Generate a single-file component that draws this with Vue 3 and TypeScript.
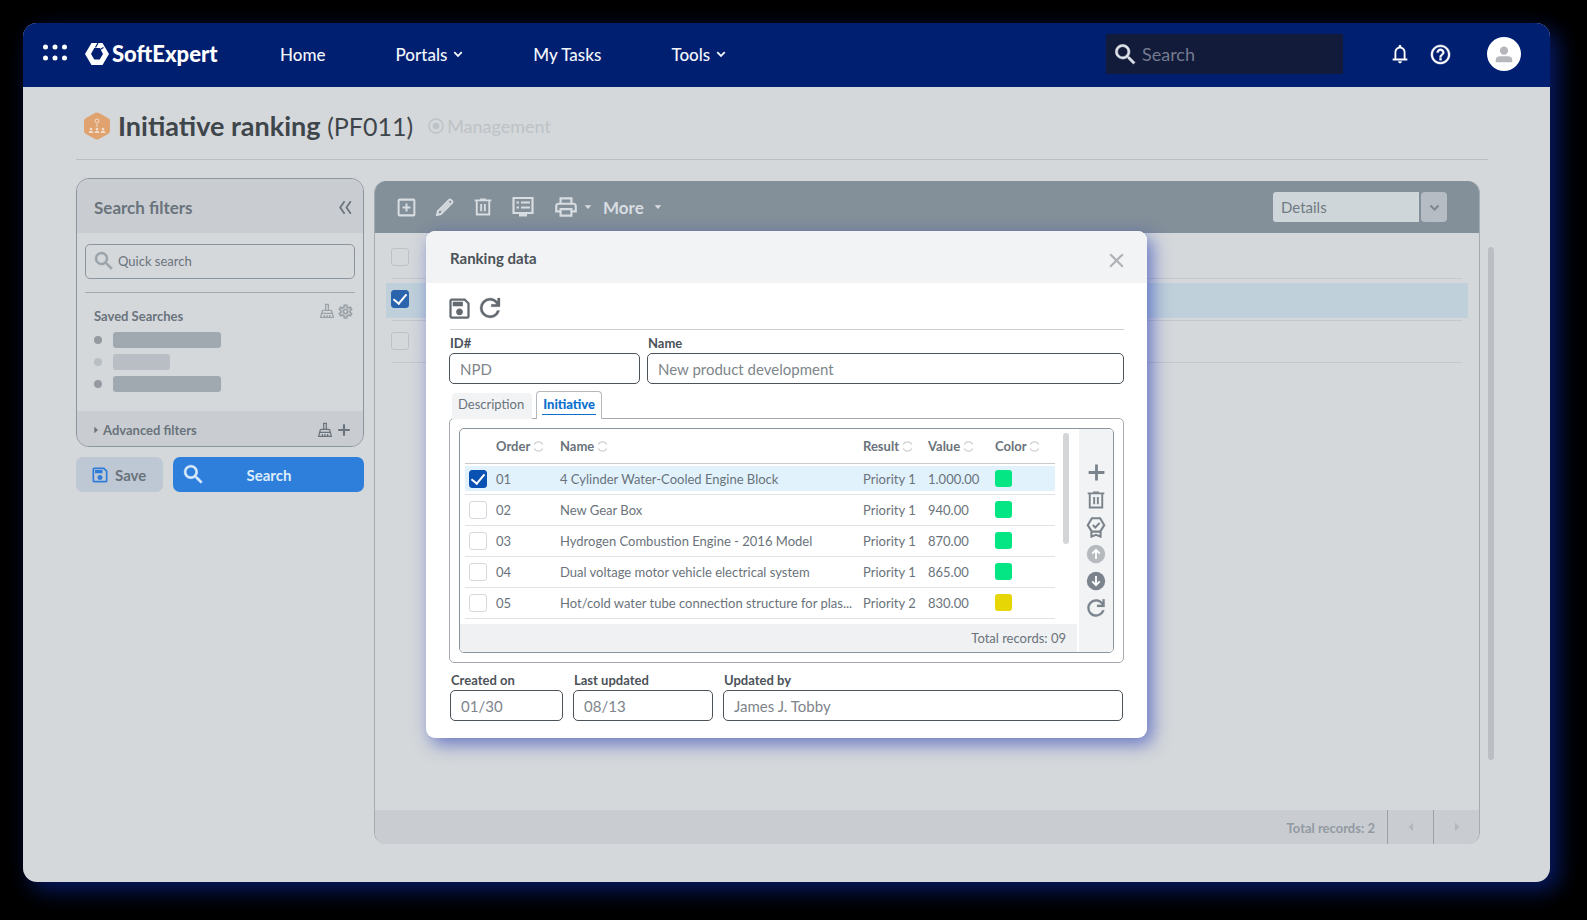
<script setup lang="ts">
import { h, ref } from 'vue'

interface Part {
  d: string
  w?: number
  c?: string
}

const icons: Record<string, Part[]> = {
  search: [{ d: 'M15.5 14h-.79l-.28-.27A6.471 6.471 0 0 0 16 9.5 6.5 6.5 0 1 0 9.5 16c1.61 0 3.09-.59 4.23-1.57l.27.28v.79l5 4.99L20.49 19l-4.99-5zm-6 0C7.01 14 5 11.99 5 9.5S7.01 5 9.5 5 14 7.01 14 9.5 11.99 14 9.5 14z', w: 0.5, c: 'both' }],
  bell: [{ d: 'M4 19v-2h2v-7q0-2.075 1.25-3.687T10.5 4.2v-.7q0-.625.438-1.062T12 2t1.063.438T13.5 3.5v.7q2 .5 3.25 2.113T18 10v7h2v2zm8 3q-.825 0-1.412-.587T10 20h4q0 .825-.587 1.413T12 22m-4-5h8v-7q0-1.65-1.175-2.825T12 6T9.175 7.175T8 10z' }],
  help: [{ d: 'M11 18h2v-2h-2v2zm1-16C6.48 2 2 6.48 2 12s4.48 10 10 10 10-4.48 10-10S17.52 2 12 2zm0 18c-4.41 0-8-3.59-8-8s3.59-8 8-8 8 3.59 8 8-3.59 8-8 8zm0-14c-2.21 0-4 1.79-4 4h2c0-1.1.9-2 2-2s2 .9 2 2c0 2-3 1.75-3 5h2c0-2.25 3-2.5 3-5 0-2.21-1.79-4-4-4z', w: 0.4, c: 'both' }],
  save: [{ d: 'M17 3H5c-1.11 0-2 .9-2 2v14c0 1.1.89 2 2 2h14c1.1 0 2-.9 2-2V7l-4-4zm2 16H5V5h11.17L19 7.83V19zm-7-7c-1.66 0-3 1.34-3 3s1.34 3 3 3 3-1.34 3-3-1.34-3-3-3zM6 6h9v4H6z' }],
  refresh: [{ d: 'M12 20q-3.35 0-5.675-2.325T4 12t2.325-5.675T12 4q1.725 0 3.3.712T18 6.75V4h2v7h-7V9h4.2q-.8-1.4-2.187-2.2T12 6Q9.5 6 7.75 7.75T6 12t1.75 4.25T12 18q1.925 0 3.475-1.1T17.65 14h2.1q-.7 2.65-2.85 4.325T12 20', w: 0.2, c: 'both' }],
  print: [{ d: 'M19 8h-1V3H6v5H5c-1.66 0-3 1.34-3 3v6h4v4h12v-4h4v-6c0-1.66-1.34-3-3-3zM8 5h8v3H8V5zm8 12v2H8v-4h8v2zm2-2v-2H6v2H4v-4c0-.55.45-1 1-1h14c.55 0 1 .45 1 1v4h-2z' }],
  trash: [{ d: 'M2 4h20M8.5 3h7M4.5 4.500v16.500h15V4.500M9.800 8.500v8.500M14.200 8.500v8.500', w: 2.3 }],
  addBox: [{ d: 'M4 3h16a1 1 0 0 1 1 1v16a1 1 0 0 1-1 1H4a1 1 0 0 1-1-1V4a1 1 0 0 1 1-1zM12 7.500v9M7.500 12h9', w: 2.3 }],
  pencil: [{ d: 'M2.500 21.500l1-4.500L17 3.500q1-1 2 0l1.500 1.500q1 1 0 2L7 20.500zM7 17L17.500 6.500', w: 2.4 }],
  monitor: [{ d: 'M2.500 3h19v15h-19zM10 7.500h9M10 12.500h9', w: 2.2 }, { d: 'M5.500 6.400h2.500v2.200H5.500zM5.500 11.400h2.500v2.200H5.500zM8 18h8v3.500H8z' }],
  plus: [{ d: 'M12 2v20M2 12h20', w: 3.6 }],
  close: [{ d: 'M4 4l16 16M20 4L4 20', w: 2.8 }],
  medal: [{ d: 'M7.500 2.500h9L21 10l-4.500 7h-9L3 10zM8.500 9.800l2.700 2.700 4.800-5M7 17v5.500l5-2 5 2V17', w: 2.3 }],
  up: [{ d: 'M12 1a11 11 0 1 0 0 22a11 11 0 1 0 0-22z' }, { d: 'M12 18V7M7.500 11.500L12 7l4.500 4.500', w: 2.2, c: '#fff' }],
  down: [{ d: 'M12 1a11 11 0 1 0 0 22a11 11 0 1 0 0-22z' }, { d: 'M12 6v11M7.500 12.500L12 17l4.500-4.500', w: 2.2, c: '#fff' }],
  broom: [{ d: 'M10 2h4v9h-4zM4.500 15.500v-2.500q0-2 2-2h11q2 0 2 2v2.500M2.500 21.500l1.500-6h16l1.500 6zM8 21v-3M12 21v-3M16 21v-3', w: 1.9 }],
  gear: [{ d: 'M19.43 12.98c.04-.32.07-.64.07-.98 0-.34-.03-.66-.07-.98l2.11-1.65c.19-.15.24-.42.12-.64l-2-3.460c-.09-.16-.26-.25-.44-.25-.06 0-.12.01-.17.03l-2.490 1c-.52-.4-1.080-.73-1.690-.98l-.38-2.650C14.460 2.180 14.250 2 14 2h-4c-.25 0-.46.18-.49.42l-.38 2.650c-.61.25-1.170.59-1.690.98l-2.490-1c-.06-.02-.12-.03-.18-.03-.17 0-.34.09-.43.25l-2 3.460c-.13.22-.07.49.12.64l2.110 1.650c-.04.32-.07.65-.07.98 0 .33.03.66.07.98l-2.110 1.650c-.19.15-.24.42-.12.64l2 3.460c.09.16.26.25.44.25.06 0 .12-.01.17-.03l2.490-1c.52.4 1.080.73 1.690.98l.38 2.650c.03.24.24.42.49.42h4c.25 0 .46-.18.49-.42l.38-2.650c.61-.25 1.170-.59 1.690-.98l2.490 1c.06.02.12.03.18.03.17 0 .34-.09.43-.25l2-3.460c.12-.22.07-.49-.12-.64l-2.110-1.650zm-1.980-1.710c.04.31.05.52.05.73 0 .21-.02.43-.05.73l-.14 1.130.89.7 1.080.84-.7 1.210-1.270-.51-1.040-.42-.9.68c-.43.32-.84.56-1.250.73l-1.060.43-.16 1.130-.2 1.350h-1.400l-.19-1.350-.16-1.130-1.060-.43c-.43-.18-.83-.41-1.230-.71l-.91-.7-1.060.43-1.270.51-.7-1.210 1.080-.84.89-.7-.14-1.130c-.03-.31-.05-.54-.05-.74s.02-.43.05-.73l.14-1.130-.89-.7-1.080-.84.7-1.210 1.270.51 1.040.42.9-.68c.43-.32.84-.56 1.250-.73l1.060-.43.16-1.130.2-1.350h1.390l.19 1.350.16 1.130 1.060.43c.43.18.83.41 1.230.71l.91.7 1.060-.43 1.270-.51.7 1.210-1.070.85-.89.7.14 1.130zM12 8c-2.210 0-4 1.790-4 4s1.790 4 4 4 4-1.790 4-4-1.790-4-4-4zm0 6c-1.100 0-2-.9-2-2s.9-2 2-2 2 .9 2 2-.9 2-2 2z', w: 0.5, c: 'both' }],
  chevron: [{ d: 'M3 7.500l9 9 9-9', w: 4.4 }],
  collapse: [{ d: 'M10.500 2L3.500 12l7 10M20.500 2l-7 10 7 10', w: 2.8 }],
  caretDown: [{ d: 'M2 7h20L12 18z' }],
  caretRight: [{ d: 'M7 2v20l11-10z' }],
  caretLeft: [{ d: 'M17 2v20L6 12z' }],
  sort: [{ d: 'M3 8q2-6 9-6t9 6M3 16q2 6 9 6t9-6', w: 2.6 }],
  target: [{ d: 'M12 1.500a10.500 10.500 0 1 0 0 21a10.500 10.500 0 1 0 0-21z', w: 2.200 }, { d: 'M12 7a5 5 0 1 0 0 10a5 5 0 1 0 0-10z' }],
  dots: [{ d: 'M0 5a2.500 2.500 0 1 0 5 0a2.500 2.500 0 1 0-5 0M9.500 5a2.500 2.500 0 1 0 5 0a2.500 2.500 0 1 0-5 0M19 5a2.500 2.500 0 1 0 5 0a2.500 2.500 0 1 0-5 0M0 16a2.500 2.500 0 1 0 5 0a2.500 2.500 0 1 0-5 0M9.500 16a2.500 2.500 0 1 0 5 0a2.500 2.500 0 1 0-5 0M19 16a2.500 2.500 0 1 0 5 0a2.500 2.500 0 1 0-5 0' }],
  person: [{ d: 'M12 2a5.500 5.500 0 1 0 0 11a5.500 5.500 0 1 0 0-11zM1 23v-3q0-5 6-5h10q6 0 6 5v3z' }],
}

const Icon = (props: { name: string; size: number }) =>
  h(
    'svg',
    { viewBox: '0 0 24 24', width: props.size, height: props.size, 'aria-hidden': 'true' },
    icons[props.name].map((p) =>
      h('path', {
        d: p.d,
        fill: !p.w || p.c === 'both' ? 'currentColor' : 'none',
        stroke: p.w ? (p.c && p.c !== 'both' ? p.c : 'currentColor') : 'none',
        'stroke-width': p.w,
      }),
    ),
  )
Icon.props = ['name', 'size']

const nav = [
  { label: 'Home', menu: false },
  { label: 'Portals', menu: true },
  { label: 'My Tasks', menu: false },
  { label: 'Tools', menu: true },
]

const mainTools = [
  { name: 'addBox', label: 'Add', size: 21 },
  { name: 'pencil', label: 'Edit', size: 20 },
  { name: 'trash', label: 'Delete', size: 20 },
  { name: 'monitor', label: 'View', size: 24 },
]

const sideTools = [
  { name: 'plus', label: 'Add', size: 19 },
  { name: 'trash', label: 'Delete', size: 20 },
  { name: 'medal', label: 'Evaluate', size: 22 },
  { name: 'up', label: 'Move up', size: 20, muted: true },
  { name: 'down', label: 'Move down', size: 20 },
  { name: 'refresh', label: 'Refresh', size: 26 },
]

const columns = ['Order', 'Name', 'Result', 'Value', 'Color']

const rows = ref([
  { on: true, order: '01', name: '4 Cylinder Water-Cooled Engine Block', result: 'Priority 1', value: '1.000.00', color: 'green' },
  { on: false, order: '02', name: 'New Gear Box', result: 'Priority 1', value: '940.00', color: 'green' },
  { on: false, order: '03', name: 'Hydrogen Combustion Engine - 2016 Model', result: 'Priority 1', value: '870.00', color: 'green' },
  { on: false, order: '04', name: 'Dual voltage motor vehicle electrical system', result: 'Priority 1', value: '865.00', color: 'green' },
  { on: false, order: '05', name: 'Hot/cold water tube connection structure for plas...', result: 'Priority 2', value: '830.00', color: 'yellow' },
])

const records = ref([false, true, false])
const id = ref('NPD')
const name = ref('New product development')
const created = ref('01/30')
const updated = ref('08/13')
const author = ref('James J. Tobby')
</script>

<template>
  <div class="page">
    <div class="window">
      <header class="topbar">
        <button class="plain" aria-label="Applications"><Icon name="dots" :size="24" /></button>
        <a href="#" class="brand">
          <svg viewBox="0 0 24 22" width="24" height="22" aria-hidden="true">
            <path fill="#fff" fill-rule="evenodd" d="M6.500 0h11L24 11l-6.500 11h-11L0 11zM9.300 5L6 11l3.300 5.500h5.400L18 11l-3.300-6z" />
            <path fill="none" stroke="#011f71" stroke-width="1.200" d="M13 0l-2.500 4.500M13.500 7.500l5-3" />
          </svg>
          <span>SoftExpert</span>
        </a>
        <nav class="nav">
          <a v-for="item in nav" :key="item.label" href="#">
            {{ item.label }}<Icon v-if="item.menu" name="chevron" :size="10" />
          </a>
        </nav>
        <label class="topsearch">
          <Icon name="search" :size="27" />
          <input type="search" placeholder="Search" aria-label="Search" />
        </label>
        <div class="actions">
          <button class="plain" aria-label="Notifications"><Icon name="bell" :size="22" /></button>
          <button class="plain" aria-label="Help"><Icon name="help" :size="23" /></button>
        </div>
        <button class="avatar" aria-label="Profile"><Icon name="person" :size="18" /></button>
      </header>

      <main class="content">
        <div class="titlebar">
          <svg class="badge" viewBox="0 0 26 28" width="26" height="28" aria-hidden="true">
            <path fill="#e0a36f" d="M11 1q2-1 4 0l9 5q2 1 2 3v10q0 2-2 3l-9 5q-2 1-4 0l-9-5q-2-1-2-3V9q0-2 2-3z" />
            <g fill="none" stroke="#f0dccb" stroke-width="1">
              <circle cx="13" cy="9" r="2" />
              <path d="M13 12v3" />
            </g>
            <g fill="#f0dccb">
              <circle cx="7" cy="17" r="1.300" /><circle cx="13" cy="17" r="1.300" /><circle cx="19" cy="17" r="1.300" />
              <path d="M4.500 21q.5-2.500 2.500-2.500t2.500 2.500zM10.500 21q.5-2.500 2.500-2.500t2.500 2.500zM16.500 21q.5-2.500 2.500-2.500t2.500 2.500z" />
            </g>
          </svg>
          <h1>Initiative ranking <span>(PF011)</span></h1>
          <span class="crumb"><Icon name="target" :size="16" />Management</span>
        </div>

        <div class="columns">
          <aside class="side">
            <section class="filters">
              <header>
                <h2>Search filters</h2>
                <button class="plain" aria-label="Collapse"><Icon name="collapse" :size="15" /></button>
              </header>
              <div class="filterbody">
                <label class="quick">
                  <Icon name="search" :size="24" />
                  <input type="search" placeholder="Quick search" aria-label="Quick search" />
                </label>
                <div class="saved">
                  <div class="savedhead">
                    <h3>Saved Searches</h3>
                    <span class="pair faint">
                      <button class="plain" aria-label="Clear saved search"><Icon name="broom" :size="16" /></button>
                      <button class="plain" aria-label="Settings"><Icon name="gear" :size="17" /></button>
                    </span>
                  </div>
                  <ul>
                    <li><i></i></li>
                    <li class="short"><i></i></li>
                    <li><i></i></li>
                  </ul>
                </div>
              </div>
              <footer>
                <button class="plain advanced"><Icon name="caretRight" :size="8" />Advanced filters</button>
                <span class="pair">
                  <button class="plain" aria-label="Clear filters"><Icon name="broom" :size="16" /></button>
                  <button class="plain" aria-label="Add filter"><Icon name="plus" :size="14" /></button>
                </span>
              </footer>
            </section>
            <div class="buttons">
              <button class="btn save"><Icon name="save" :size="20" />Save</button>
              <button class="btn go"><Icon name="search" :size="25" /><span>Search</span></button>
            </div>
          </aside>

          <section class="board">
            <div class="toolbar">
              <button v-for="t in mainTools" :key="t.name" class="plain tool" :aria-label="t.label">
                <Icon :name="t.name" :size="t.size" />
              </button>
              <button class="plain tool print" aria-label="Print">
                <Icon name="print" :size="26" /><Icon name="caretDown" :size="8" />
              </button>
              <button class="plain more">More<Icon name="caretDown" :size="8" /></button>
              <div class="picker">
                <select aria-label="View mode"><option>Details</option></select>
                <span><Icon name="chevron" :size="11" /></span>
              </div>
            </div>
            <ul class="records">
              <li v-for="(r, i) in records" :key="i" :class="{ selected: r }">
                <input v-model="records[i]" type="checkbox" :aria-label="'Select record ' + i" />
              </li>
            </ul>
            <footer class="pager">
              <span>Total records: 2</span>
              <button class="plain" aria-label="Previous page"><Icon name="caretLeft" :size="10" /></button>
              <button class="plain" aria-label="Next page"><Icon name="caretRight" :size="10" /></button>
            </footer>
          </section>
          <div class="scroll"></div>
        </div>
      </main>

      <div class="overlay">
        <section class="modal" role="dialog" aria-label="Ranking data">
          <header>
            <h2>Ranking data</h2>
            <button class="plain" aria-label="Close"><Icon name="close" :size="19" /></button>
          </header>
          <div class="modalbody">
            <div class="modaltools">
              <button class="plain" aria-label="Save record"><Icon name="save" :size="27" /></button>
              <button class="plain" aria-label="Reload"><Icon name="refresh" :size="30" /></button>
            </div>
            <div class="fields top">
              <label class="field"><span>ID#</span><input v-model="id" type="text" /></label>
              <label class="field"><span>Name</span><input v-model="name" type="text" /></label>
            </div>
            <div class="tabs" role="tablist">
              <button class="tab" role="tab">Description</button>
              <button class="tab active" role="tab" aria-selected="true"><span>Initiative</span></button>
            </div>
            <div class="panel">
              <div class="grid">
                <div class="gridmain">
                  <div class="gridview">
                    <table>
                      <thead>
                        <tr>
                          <th class="pick"></th>
                          <th v-for="c in columns" :key="c" :class="c.toLowerCase()">
                            {{ c }} <Icon name="sort" :size="11" />
                          </th>
                        </tr>
                      </thead>
                      <tbody>
                        <tr v-for="row in rows" :key="row.order" :class="{ selected: row.on }">
                          <td><input v-model="row.on" type="checkbox" :aria-label="'Select ' + row.order" /></td>
                          <td>{{ row.order }}</td>
                          <td>{{ row.name }}</td>
                          <td>{{ row.result }}</td>
                          <td>{{ row.value }}</td>
                          <td><i class="swatch" :class="row.color"></i></td>
                        </tr>
                      </tbody>
                    </table>
                    <div class="thumb"></div>
                  </div>
                  <footer>Total records: 09</footer>
                </div>
                <div class="gridtools">
                  <button v-for="t in sideTools" :key="t.name" class="plain" :class="{ muted: t.muted }" :aria-label="t.label">
                    <Icon :name="t.name" :size="t.size" />
                  </button>
                </div>
              </div>
            </div>
            <div class="fields bottom">
              <label class="field"><span>Created on</span><input v-model="created" type="text" /></label>
              <label class="field"><span>Last updated</span><input v-model="updated" type="text" /></label>
              <label class="field"><span>Updated by</span><input v-model="author" type="text" /></label>
            </div>
          </div>
        </section>
      </div>
    </div>
  </div>
</template>

<style>
body {
  margin: 0;
  background: #000;
}
</style>

<style scoped>
.page,
.page * {
  box-sizing: border-box;
}
.page {
  display: flex;
  min-height: 100vh;
  padding: 23px 37px 38px 23px;
  background: #000;
  font-family: Lato, "Liberation Sans", sans-serif;
  font-size: 13px;
  color: #6a737b;
}
.page h1,
.page h2,
.page h3,
.page ul {
  margin: 0;
  padding: 0;
  list-style: none;
}
.page svg {
  flex: none;
  display: block;
}
.page input,
.page button,
.page select {
  font-family: inherit;
}
.plain {
  display: flex;
  align-items: center;
  justify-content: center;
  padding: 0;
  border: 0;
  background: none;
  color: inherit;
}
.window {
  position: relative;
  display: flex;
  flex-direction: column;
  flex: 1;
  min-width: 0;
  border-radius: 14px;
  background: #d4d8db;
  box-shadow: 8px 8px 22px #071a66;
}
.topbar {
  display: flex;
  align-items: center;
  height: 64px;
  padding: 0 29px 2px 20px;
  border-radius: 14px 14px 0 0;
  background: #011f71;
  color: #fff;
}
.brand {
  display: flex;
  align-items: center;
  gap: 3px;
  width: 194px;
  margin-left: 18px;
  margin-right: 1px;
  color: #fff;
  font-size: 22px;
  font-weight: 900;
  line-height: 22px;
  text-decoration: none;
}
.nav {
  display: flex;
  gap: 70px;
  flex: 1;
}
.nav a {
  display: flex;
  align-items: center;
  gap: 6px;
  color: #f2f6fc;
  font-size: 17px;
  font-weight: 500;
  text-decoration: none;
}
.topsearch {
  display: flex;
  align-items: center;
  gap: 3px;
  width: 237px;
  height: 40px;
  padding: 0 6px;
  background: #121b39;
  color: #dfe3ea;
}
.topsearch input,
.quick input {
  flex: 1;
  min-width: 0;
  padding: 0;
  border: 0;
  outline: 0;
  background: none;
  color: inherit;
}
.topsearch input {
  font-size: 18px;
}
.topsearch input::placeholder {
  color: #737a90;
}
.actions {
  display: flex;
  gap: 18px;
  margin: 0 35px 0 46px;
}
.avatar {
  display: flex;
  align-items: center;
  justify-content: center;
  width: 34px;
  height: 34px;
  padding: 0;
  border: 0;
  border-radius: 50%;
  background: #fff;
  color: #b5b7ba;
}
.content {
  display: flex;
  flex-direction: column;
  flex: 1;
  padding: 0 56px 38px 53px;
}
.titlebar {
  display: flex;
  align-items: center;
  height: 73px;
  margin-right: 6px;
  padding: 6px 8px 0;
  border-bottom: 1px solid #b9bec2;
}
.titlebar h1 {
  margin-left: 8px;
  color: #3f464b;
  font-size: 27px;
  font-weight: 700;
  line-height: 32px;
}
.titlebar h1 span {
  font-size: 25px;
  font-weight: 400;
}
.crumb {
  display: flex;
  align-items: center;
  gap: 3px;
  margin-left: 15px;
  color: #bdc2c6;
  font-size: 18px;
}
.columns {
  display: flex;
  flex: 1;
  padding-top: 18px;
}
.side {
  width: 288px;
}
.filters {
  overflow: hidden;
  border: 1px solid #8b959d;
  border-radius: 13px;
}
.filters header {
  display: flex;
  align-items: center;
  justify-content: space-between;
  height: 54px;
  padding: 2px 10px 0 17px;
  background: #c9cdd2;
}
.filters h2 {
  font-size: 17px;
  font-weight: 700;
}
.filterbody {
  padding: 11px 8px 0;
}
.quick {
  display: flex;
  align-items: center;
  gap: 2px;
  height: 35px;
  padding: 0 0 2px 6px;
  border: 1px solid #8b959d;
  border-radius: 5px;
  color: #9aa3a9;
}
.quick input {
  font-size: 13px;
}
.quick input::placeholder {
  color: #6a737b;
}
.saved {
  height: 119px;
  margin-top: 13px;
  padding: 10px 1px 0 9px;
  border-top: 1px solid #a3abb1;
}
.savedhead {
  display: flex;
  justify-content: space-between;
  height: 29px;
}
.savedhead h3 {
  padding-top: 5px;
  font-size: 13px;
  font-weight: 700;
  line-height: 16px;
}
.pair {
  display: flex;
  align-items: center;
  gap: 4px;
}
.faint {
  align-items: flex-start;
  gap: 2px;
  color: #9aa2a8;
}
.saved ul {
  display: flex;
  flex-direction: column;
  gap: 6px;
}
.saved li {
  display: flex;
  align-items: center;
  gap: 11px;
}
.saved li::before {
  content: "";
  width: 8px;
  height: 8px;
  border-radius: 50%;
  background: #949a9f;
}
.saved li i {
  width: 108px;
  height: 16px;
  border-radius: 3px;
  background: #a1a9b0;
}
.saved li.short::before {
  background: #b9bec3;
}
.saved li.short i {
  width: 57px;
  background: #b9bec4;
}
.filters footer {
  display: flex;
  align-items: center;
  justify-content: space-between;
  height: 35px;
  padding: 2px 12px 0 15px;
  background: #c9cdd2;
}
.advanced {
  gap: 3px;
  font-size: 13px;
  font-weight: 700;
}
.buttons {
  display: flex;
  gap: 10px;
  margin-top: 10px;
}
.btn {
  display: flex;
  align-items: center;
  height: 35px;
  border: 0;
  border-radius: 7px;
  font-size: 15px;
  font-weight: 700;
}
.save {
  gap: 5px;
  width: 87px;
  padding: 0 14px;
  background: #bdc8d4;
  color: #6a737b;
}
.save svg {
  color: #2f7cd8;
}
.go {
  flex: 1;
  padding: 0 8px;
  background: #2e7edc;
  color: #dcecfb;
}
.go span {
  flex: 1;
  padding-right: 24px;
  text-align: center;
}
.board {
  display: flex;
  flex-direction: column;
  flex: 1;
  min-width: 0;
  margin: 3px 0 0 10px;
  overflow: hidden;
  border: 1px solid #a4abb1;
  border-bottom: 0;
  border-top: 0;
  border-radius: 12px;
}
.toolbar {
  display: flex;
  align-items: center;
  height: 52px;
  padding: 0 32px 0 21px;
  background: #838f99;
  color: #d8dde1;
}
.tool {
  margin-right: 18px;
}
.tool.print {
  gap: 5px;
  margin-right: 11px;
}
.more {
  gap: 10px;
  font-size: 17px;
  font-weight: 700;
}
.picker {
  display: flex;
  position: relative;
  width: 174px;
  height: 30px;
  margin-left: auto;
}
.picker select {
  width: 100%;
  height: 100%;
  padding: 0 8px;
  border: 0;
  border-right: 28px solid #838f99;
  border-radius: 3px;
  appearance: none;
  background: #ced6da;
  color: #717a82;
  font-size: 15px;
}
.picker span {
  position: absolute;
  right: 0;
  display: flex;
  align-items: center;
  justify-content: center;
  width: 26px;
  height: 30px;
  border-radius: 4px;
  background: #b5bcc3;
  color: #7f8890;
  pointer-events: none;
}
.records {
  display: flex;
  flex-direction: column;
  flex: 1;
}
.page .records {
  padding: 4px 11px 0;
}
.records li {
  display: flex;
  align-items: center;
  height: 42px;
  padding: 0 5px 2px;
  background: linear-gradient(#c3c8cc, #c3c8cc) bottom / calc(100% - 12px) 1px no-repeat;
}
.records li.selected {
  background:
    linear-gradient(#c3c8cc, #c3c8cc) bottom / calc(100% - 12px) 1px no-repeat,
    linear-gradient(#bfd0da, #bfd0da) center / 100% 35px no-repeat;
}
input[type="checkbox"] {
  display: flex;
  align-items: center;
  justify-content: center;
  width: 18px;
  height: 18px;
  margin: 0;
  border: 1px solid #d5d8dc;
  border-radius: 3px;
  appearance: none;
  background: #fff;
}
input[type="checkbox"]:checked {
  border-color: #0a51b4;
  background: #0a51b4;
}
input[type="checkbox"]:checked::before {
  content: "";
  width: 6px;
  height: 11px;
  margin-bottom: 3px;
  border: solid #fff;
  border-width: 0 2px 2px 0;
  transform: rotate(40deg);
}
.records input[type="checkbox"] {
  border-color: #bcc1c5;
  background: none;
}
.records input[type="checkbox"]:checked {
  border-color: #2a64ac;
  background: #2a64ac;
}
.pager {
  display: flex;
  height: 34px;
  background: #c9cdd2;
  color: #929aa2;
  font-weight: 700;
  line-height: 36px;
}
.pager span {
  margin-left: auto;
  padding-right: 12px;
}
.pager button {
  width: 46px;
  border-left: 1px solid #9aa1a7;
  color: #b1b7bd;
}
.scroll {
  width: 6px;
  height: 513px;
  margin: 69px 0 0 8px;
  border-radius: 3px;
  background: #bbbfc3;
}
.overlay {
  position: absolute;
  inset: 0;
  display: flex;
  align-items: flex-start;
  justify-content: center;
  padding-top: 208px;
}
.modal {
  width: 721px;
  overflow: hidden;
  border-radius: 9px;
  background: #fff;
  box-shadow: 5px 6px 18px rgba(30, 50, 180, 0.6);
}
.modal header {
  display: flex;
  align-items: center;
  justify-content: space-between;
  height: 52px;
  padding: 2px 21px 0 24px;
  background: #f2f3f4;
  color: #b0b3b6;
}
.modal header .plain {
  padding-top: 4px;
}
.modal h2 {
  color: #4b5258;
  font-size: 15px;
  font-weight: 700;
}
.modalbody {
  padding: 0 23px 17px;
}
.modaltools {
  display: flex;
  align-items: center;
  gap: 2px;
  height: 47px;
  padding: 4px 0 0;
  margin: 0 0 6px 1px;
  border-bottom: 1px solid #cdd0d3;
  color: #626a70;
}
.modaltools .plain:first-child {
  margin-left: -4px;
}
.fields {
  display: grid;
  gap: 7px;
}
.fields.top {
  grid-template-columns: 191px 1fr;
}
.fields.bottom {
  grid-template-columns: 113px 140px 1fr;
  gap: 10px;
  margin-top: 10px;
  padding: 0 1px;
}
.field span {
  display: block;
  height: 17px;
  padding-left: 1px;
  color: #4b5258;
  font-size: 13px;
  font-weight: 700;
  line-height: 15px;
}
.field input {
  display: block;
  width: 100%;
  height: 31px;
  padding: 0 10px;
  border: 1px solid #4b5258;
  border-radius: 5px;
  background: #fff;
  color: #7e858b;
  font-size: 15px;
}
.tabs {
  display: flex;
  align-items: flex-end;
  gap: 4px;
  margin: 7px 0 -1px;
  padding-left: 3px;
}
.tab {
  height: 26px;
  padding: 0 8px 4px 6px;
  border: 0;
  border-radius: 4px 4px 0 0;
  background: #f2f3f4;
  color: #6a737b;
  font-size: 13px;
}
.tab.active {
  z-index: 1;
  height: 28px;
  padding: 0 5px 3px;
  border: 1px solid #b5b9bd;
  border-bottom: 0;
  background: #fff;
  color: #0a6fd0;
  font-weight: 900;
}
.tab.active span {
  display: block;
  padding: 2px 1px;
  border-bottom: 1px solid #0a6fd0;
}
.panel {
  padding: 9px;
  border: 1px solid #a4aaaf;
  border-radius: 5px;
}
.grid {
  display: flex;
  overflow: hidden;
  border: 1px solid #8b949c;
  border-radius: 5px;
}
.gridmain {
  flex: 1;
  min-width: 0;
}
.gridview {
  display: flex;
  height: 195px;
  padding-left: 5px;
}
table {
  flex: 1;
  height: 1px;
  border-collapse: collapse;
  table-layout: fixed;
}
th {
  height: 34px;
  padding: 0;
  border-bottom: 1px solid #c9cccf;
  font-size: 13px;
  font-weight: 700;
  text-align: left;
  white-space: nowrap;
}
th svg {
  color: #cdd0d3;
}
.page th svg {
  display: inline-block;
  vertical-align: -1px;
}
.pick {
  width: 31px;
}
.order {
  width: 64px;
}
.result {
  width: 65px;
}
.value {
  width: 67px;
}
.color {
  width: 60px;
}
td {
  height: 31px;
  padding: 0;
  border-bottom: 1px solid #e0e2e4;
  white-space: nowrap;
}
td:first-child {
  padding-left: 4px;
}
tr.selected td {
  background: linear-gradient(#e1f2fd, #e1f2fd) center / 100% 25px no-repeat;
}
.swatch {
  display: block;
  width: 17px;
  height: 17px;
  border-radius: 3px;
}
.green {
  background: #04e583;
}
.yellow {
  background: #e6d605;
}
.thumb {
  width: 6px;
  height: 111px;
  margin: 4px 8px 0;
  border-radius: 3px;
  background: #d3d5d7;
}
.gridmain footer {
  height: 28px;
  padding-right: 11px;
  background: #f0f1f3;
  line-height: 28px;
  text-align: right;
}
.gridtools {
  display: flex;
  flex-direction: column;
  align-items: center;
  width: 36px;
  padding-top: 30px;
  border-left: 2px solid #fff;
  background: #f2f3f5;
  color: #7b848c;
}
.gridtools button {
  height: 27px;
}
.gridtools .muted {
  color: #b5babf;
}
</style>
